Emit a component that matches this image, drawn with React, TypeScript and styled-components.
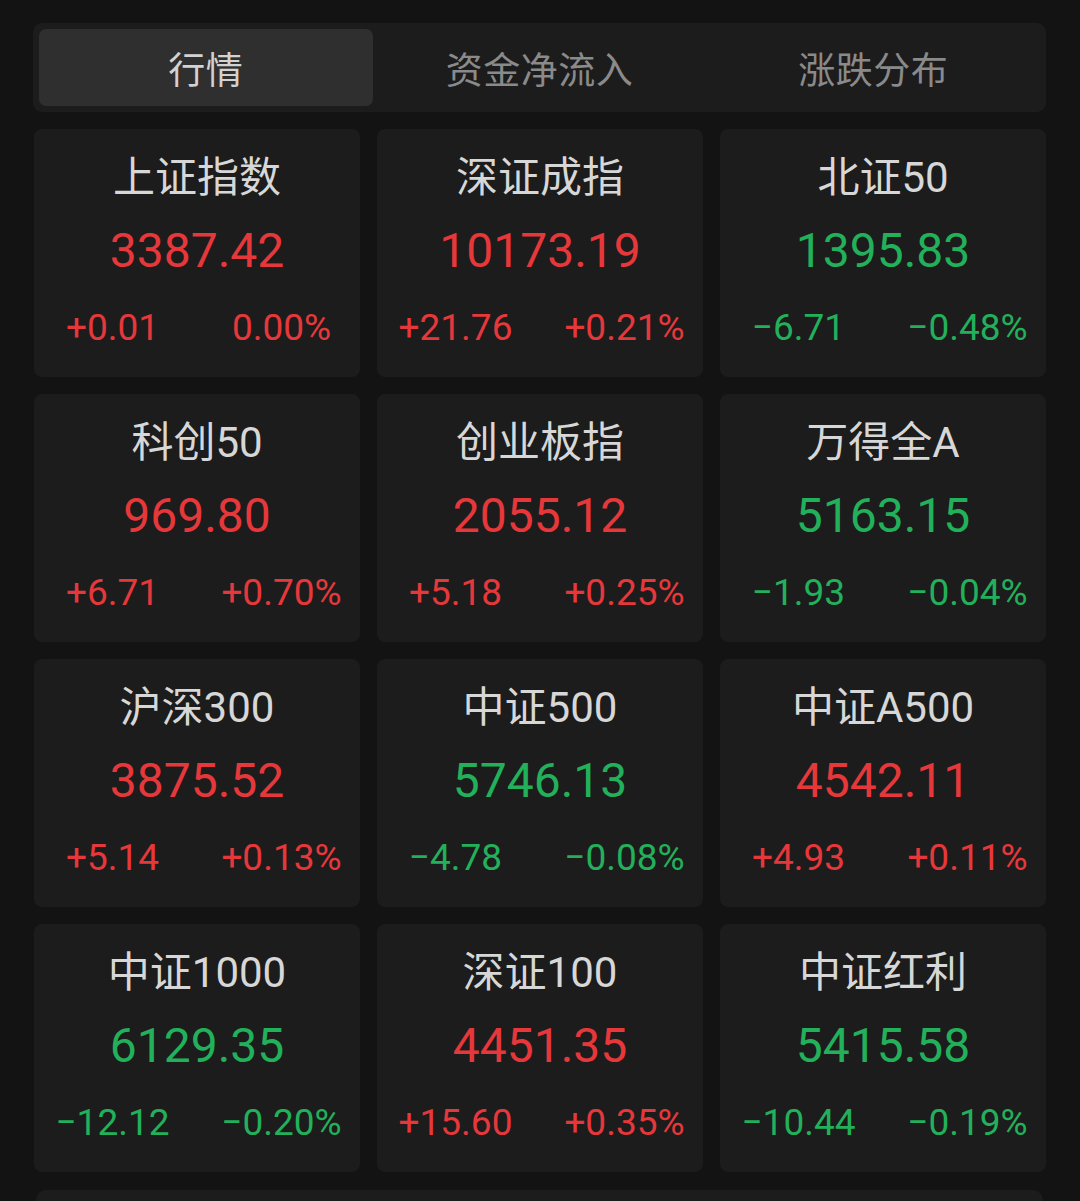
import React from 'react';
import styled, { createGlobalStyle } from 'styled-components';

const GlobalStyle = createGlobalStyle`
  html, body {
    margin: 0;
    padding: 0;
    background: #131313;
  }
  body {
    font-family: Roboto, "Noto Sans CJK SC", sans-serif;
  }
`;

const colors = {
  up: '#e6383b',
  down: '#22b05b',
  title: '#d7d7d7',
  tabActive: '#d2d2d2',
  tabIdle: '#8a8a8a',
  surface: '#1c1c1c',
  tabActiveBg: '#2f2f2f',
};

type Trend = 'up' | 'down';

interface IndexQuote {
  name: string;
  price: string;
  change: string;
  percent: string;
  trend: Trend;
}

const quotes: IndexQuote[] = [
  { name: '上证指数', price: '3387.42', change: '+0.01', percent: '0.00%', trend: 'up' },
  { name: '深证成指', price: '10173.19', change: '+21.76', percent: '+0.21%', trend: 'up' },
  { name: '北证50', price: '1395.83', change: '−6.71', percent: '−0.48%', trend: 'down' },
  { name: '科创50', price: '969.80', change: '+6.71', percent: '+0.70%', trend: 'up' },
  { name: '创业板指', price: '2055.12', change: '+5.18', percent: '+0.25%', trend: 'up' },
  { name: '万得全A', price: '5163.15', change: '−1.93', percent: '−0.04%', trend: 'down' },
  { name: '沪深300', price: '3875.52', change: '+5.14', percent: '+0.13%', trend: 'up' },
  { name: '中证500', price: '5746.13', change: '−4.78', percent: '−0.08%', trend: 'down' },
  { name: '中证A500', price: '4542.11', change: '+4.93', percent: '+0.11%', trend: 'up' },
  { name: '中证1000', price: '6129.35', change: '−12.12', percent: '−0.20%', trend: 'down' },
  { name: '深证100', price: '4451.35', change: '+15.60', percent: '+0.35%', trend: 'up' },
  { name: '中证红利', price: '5415.58', change: '−10.44', percent: '−0.19%', trend: 'down' },
];

const tabs = ['行情', '资金净流入', '涨跌分布'];

const Page = styled.div`
  padding: 23px 34px 0 34px;
  height: 1201px;
  box-sizing: border-box;
  overflow: hidden;
  display: flex;
  flex-direction: column;
  gap: 17px;

  & > * {
    flex-shrink: 0;
  }
`;

const TabBar = styled.div`
  display: grid;
  grid-template-columns: repeat(3, 1fr);
  padding: 6px;
  margin-left: -1px;
  height: 89px;
  box-sizing: border-box;
  background: ${colors.surface};
  border-radius: 9px;
`;

const Tab = styled.div<{ $active: boolean }>`
  display: flex;
  align-items: center;
  justify-content: center;
  border-radius: 7px;
  font-size: 37px;
  letter-spacing: 0.5px;
  background: ${({ $active }) => ($active ? colors.tabActiveBg : 'transparent')};
  color: ${({ $active }) => ($active ? colors.tabActive : colors.tabIdle)};
`;

const Grid = styled.div`
  display: grid;
  grid-template-columns: repeat(3, 1fr);
  column-gap: 17px;
  row-gap: 17px;
`;

const Card = styled.div`
  height: 248px;
  box-sizing: border-box;
  padding-top: 24px;
  background: ${colors.surface};
  border-radius: 8px;
  display: flex;
  flex-direction: column;
  align-items: center;
`;

const Title = styled.div`
  height: 50px;
  line-height: 50px;
  font-size: 42px;
  color: ${colors.title};
`;

const Price = styled.div<{ $trend: Trend }>`
  margin-top: 18px;
  height: 60px;
  line-height: 60px;
  font-size: 48px;
  color: ${({ $trend }) => colors[$trend]};
`;

const ChangeRow = styled.div<{ $trend: Trend }>`
  margin-top: 27px;
  width: 100%;
  display: grid;
  grid-template-columns: 1fr 1fr;
  height: 40px;
  line-height: 40px;
  font-size: 37px;
  color: ${({ $trend }) => colors[$trend]};
`;

const ChangeCell = styled.span<{ $side: 'left' | 'right' }>`
  text-align: center;
  transform: translateX(${({ $side }) => ($side === 'left' ? '-3px' : '3px')});
`;

const NextPanel = styled.div`
  height: 60px;
  margin: 1px 3px 0 2px;
  background: ${colors.surface};
  border-radius: 10px;
`;

const QuoteCard: React.FC<IndexQuote> = ({ name, price, change, percent, trend }) => (
  <Card>
    <Title>{name}</Title>
    <Price $trend={trend}>{price}</Price>
    <ChangeRow $trend={trend}>
      <ChangeCell $side="left">{change}</ChangeCell>
      <ChangeCell $side="right">{percent}</ChangeCell>
    </ChangeRow>
  </Card>
);

export default function App() {
  return (
    <>
      <GlobalStyle />
      <Page>
        <TabBar>
          {tabs.map((t, i) => (
            <Tab key={t} $active={i === 0}>
              {t}
            </Tab>
          ))}
        </TabBar>
        <Grid>
          {quotes.map((q) => (
            <QuoteCard key={q.name} {...q} />
          ))}
        </Grid>
        <NextPanel />
      </Page>
    </>
  );
}
